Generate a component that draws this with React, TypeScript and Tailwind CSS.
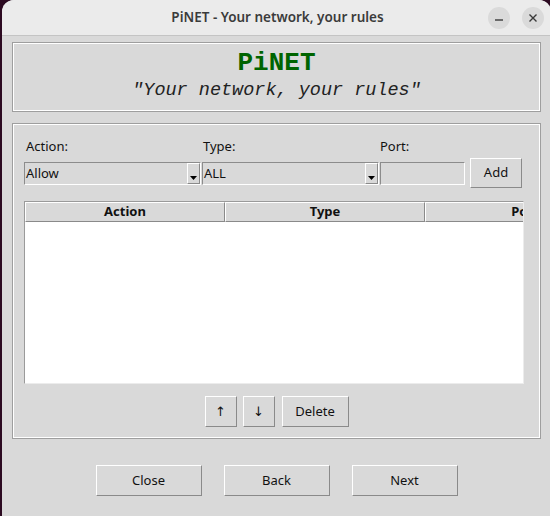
const sans = { fontFamily: '"Noto Sans", "DejaVu Sans", sans-serif' };
const mono = {
  fontFamily: '"Courier New", "Nimbus Mono PS", "Nimbus Mono L", FreeMono, "Liberation Mono", monospace',
};

const raised =
  "border border-t-white border-l-white border-r-[#8a8a8a] border-b-[#8a8a8a] bg-[#d9d9d9] flex items-center justify-center text-[13px] text-[#111]";
const sunken =
  "border border-t-[#8c8c8c] border-l-[#8c8c8c] border-r-white border-b-white bg-[#d9d9d9]";

const Groove = ({ className, children }: { className: string; children?: React.ReactNode }) => (
  <div className={"border border-[#9e9e9e] " + className}>
    <div className="border border-white h-full w-full">{children}</div>
  </div>
);

const Arrow = () => (
  <div className="w-[13px] h-[21px] border border-t-white border-l-white border-r-[#8a8a8a] border-b-[#8a8a8a] flex items-end justify-center pb-[3px]">
    <svg width="7" height="4" viewBox="0 0 7 4">
      <polygon points="0,0 7,0 3.5,4" fill="#000" />
    </svg>
  </div>
);

const Combo = ({ value }: { value: string }) => (
  <div className={sunken + " w-[177px] h-[23px] flex items-center justify-between"}>
    <span className="pl-[1px] text-[13px] text-[#111] leading-none">{value}</span>
    <Arrow />
  </div>
);

const Heading = ({ label }: { label: string }) => (
  <div className="w-[200px] shrink-0 h-full border border-t-white border-l-white border-r-[#8a8a8a] border-b-[#8a8a8a] flex items-center justify-center text-[13px] font-bold text-[#111]">
    {label}
  </div>
);

export default function App() {
  return (
    <div className="min-h-screen h-[516px] bg-[#2c0a21] overflow-hidden" style={sans}>
      <div className="ml-[2px] w-[549px] h-[516px] rounded-t-[12px] overflow-hidden bg-[#d9d9d9] flex flex-col">
        <div className="relative h-[36px] shrink-0 bg-[#ebebeb] border-b border-[#c4c4c4] flex items-center justify-center">
          <span className="text-[13.5px] font-semibold text-[#3b3b3b] ml-[2px]">PiNET - Your network, your rules</span>
          <div className="absolute right-[7px] top-[7px] flex gap-[12px]">
            <div className="w-[22px] h-[22px] rounded-full bg-[#dadada] flex items-center justify-center">
              <svg width="10" height="10" viewBox="0 0 10 10">
                <line x1="1" y1="7" x2="9" y2="7" stroke="#3a3a3a" strokeWidth="1.4" />
              </svg>
            </div>
            <div className="w-[22px] h-[22px] rounded-full bg-[#dadada] flex items-center justify-center">
              <svg width="10" height="10" viewBox="0 0 10 10">
                <path d="M1.5 1.5 L8.5 8.5 M8.5 1.5 L1.5 8.5" stroke="#3a3a3a" strokeWidth="1.4" />
              </svg>
            </div>
          </div>
        </div>

        <div className="px-[10px] pt-[6px] flex flex-col">
          <Groove className="h-[70px]">
            <div className="h-full flex flex-col items-center justify-center">
              <div className="text-[26px] leading-[28px] font-bold text-[#006400]" style={mono}>
                PiNET
              </div>
              <div className="text-[18.5px] leading-[28px] italic text-[#222]" style={mono}>
                "Your network, your rules"
              </div>
            </div>
          </Groove>

          <Groove className="mt-[11px] h-[316px]">
            <div className="pl-[10px] pt-[12px] flex flex-col">
              <div className="flex h-[18px] text-[13px] leading-[18px] text-[#111]">
                <div className="w-[177px] pl-[2px]">Action:</div>
                <div className="w-[178px] pl-[2px]">Type:</div>
                <div className="w-[85px] pl-[1px]">Port:</div>
              </div>
              <div className="mt-[3px] flex h-[30px] items-center">
                <Combo value="Allow" />
                <div className="ml-[1px]">
                  <Combo value="ALL" />
                </div>
                <div className={sunken + " ml-[1px] w-[85px] h-[23px]"} />
                <div className={raised + " ml-[5px] w-[52px] h-[30px]"}>Add</div>
              </div>

              <div className="mt-[13px] w-[500px] h-[183px] border border-t-[#9a9a9a] border-l-[#9a9a9a] border-r-[#ececec] border-b-[#ececec] bg-white overflow-hidden flex flex-col">
                <div className="h-[20px] shrink-0 flex bg-[#d9d9d9]">
                  <Heading label="Action" />
                  <Heading label="Type" />
                  <Heading label="Port" />
                </div>
                <div className="flex-1 bg-white" />
              </div>

              <div className="mt-[12px] pr-[10px] flex justify-center gap-[6px]">
                <div className={raised + " w-[32px] h-[31px]"}>↑</div>
                <div className={raised + " w-[32px] h-[31px]"}>↓</div>
                <div className={raised + " ml-[1px] w-[67px] h-[31px]"}>Delete</div>
              </div>
            </div>
          </Groove>

          <div className="mt-[26px] flex justify-center gap-[22px]">
            <div className={raised + " w-[106px] h-[31px]"}>Close</div>
            <div className={raised + " w-[106px] h-[31px]"}>Back</div>
            <div className={raised + " w-[106px] h-[31px]"}>Next</div>
          </div>
        </div>
      </div>
    </div>
  );
}
